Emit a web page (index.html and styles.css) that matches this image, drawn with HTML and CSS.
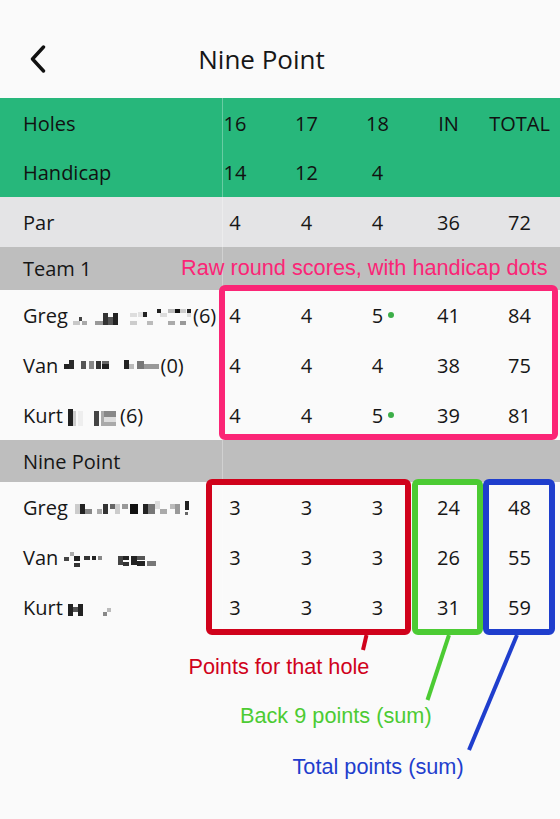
FILE: index.html
```html
<!DOCTYPE html>
<html lang="en">
<head>
<title>Nine Point</title>
<meta name="viewport" content="width=device-width, initial-scale=1" />
<meta charset="utf-8" />
<link rel="stylesheet" href="styles.css">
</head>
<body>
<div class="page">
<header class="nav">
	<svg class="back" viewBox="0 0 16 28"><path d="M13.5 2 L2.5 14 L13.5 26" /></svg>
	<h1>Nine Point</h1>
</header>

<div class="card">
	<div class="row head green">
		<div class="label"><span>Holes</span></div>
		<div>16</div><div>17</div><div>18</div><div>IN</div><div>TOTAL</div>
	</div>
	<div class="row hcp green">
		<div class="label"><span>Handicap</span></div>
		<div>14</div><div>12</div><div>4</div><div></div><div></div>
	</div>
	<div class="row par">
		<div class="label"><span>Par</span></div>
		<div>4</div><div>4</div><div>4</div><div>36</div><div>72</div>
	</div>

	<div class="row section">
		<div class="label"><span>Team 1</span></div>
	</div>
	<div class="row player">
		<div class="label"><span>Greg <svg class="mosaic" width="118" height="18"><rect x="0" y="12" width="7" height="4" fill="#c8c8c8"/><rect x="6" y="8" width="3" height="4" fill="#444"/><rect x="9" y="12" width="5" height="4" fill="#aaa"/><rect x="22" y="12" width="8" height="4" fill="#999"/><rect x="30" y="4" width="5" height="12" fill="#333"/><rect x="35" y="8" width="5" height="8" fill="#555"/><rect x="40" y="4" width="5" height="12" fill="#222"/><rect x="57" y="4" width="7" height="4" fill="#ddd"/><rect x="57" y="12" width="7" height="4" fill="#ccc"/><rect x="65" y="3" width="5" height="5" fill="#e2e2e2"/><rect x="70" y="3" width="4" height="5" fill="#222"/><rect x="74" y="12" width="6" height="4" fill="#bbb"/><rect x="84" y="0" width="4" height="4" fill="#222"/><rect x="87" y="4" width="7" height="4" fill="#ddd"/><rect x="95" y="0" width="7" height="4" fill="#bbb"/><rect x="95" y="12" width="7" height="4" fill="#aaa"/><rect x="102" y="0" width="5" height="4" fill="#111"/><rect x="107" y="0" width="6" height="4" fill="#ccc"/><rect x="107" y="12" width="6" height="4" fill="#999"/><rect x="114" y="0" width="4" height="4" fill="#222"/><rect x="114" y="4" width="4" height="4" fill="#ddd"/></svg>(6)</span></div>
		<div>4</div><div>4</div><div><span class="dot">5</span></div><div>41</div><div>84</div>
	</div>
	<div class="row player">
		<div class="label"><span>Van <svg class="mosaic" width="95" height="18"><rect x="0" y="5" width="5" height="5" fill="#222"/><rect x="5" y="1" width="5" height="9" fill="#2a2a2a"/><rect x="17" y="2" width="5" height="8" fill="#555"/><rect x="25" y="2" width="5" height="8" fill="#888"/><rect x="32" y="2" width="5" height="8" fill="#333"/><rect x="38" y="2" width="7" height="3" fill="#666"/><rect x="38" y="5" width="7" height="5" fill="#222"/><rect x="60" y="1" width="5" height="9" fill="#222"/><rect x="65" y="5" width="5" height="5" fill="#bbb"/><rect x="73" y="2" width="7" height="8" fill="#777"/><rect x="80" y="5" width="15" height="5" fill="#999"/></svg>(0)</span></div>
		<div>4</div><div>4</div><div>4</div><div>38</div><div>75</div>
	</div>
	<div class="row player">
		<div class="label"><span>Kurt <svg class="mosaic" width="50" height="18"><rect x="0" y="0" width="5" height="17" fill="#222"/><rect x="5" y="2" width="3" height="15" fill="#ccc"/><rect x="10" y="2" width="5" height="15" fill="#eee"/><rect x="26" y="2" width="5" height="15" fill="#444"/><rect x="33" y="2" width="3" height="15" fill="#aaa"/><rect x="36" y="2" width="12" height="6" fill="#888"/><rect x="36" y="8" width="12" height="5" fill="#ddd"/><rect x="36" y="13" width="12" height="4" fill="#aaa"/></svg>(6)</span></div>
		<div>4</div><div>4</div><div><span class="dot">5</span></div><div>39</div><div>81</div>
	</div>

	<div class="row section nine">
		<div class="label"><span>Nine Point</span></div>
	</div>
	<div class="row player">
		<div class="label"><span>Greg <svg class="mosaic" width="118" height="18"><rect x="2" y="3" width="5" height="10" fill="#ccc"/><rect x="7" y="3" width="5" height="10" fill="#222"/><rect x="12" y="8" width="7" height="5" fill="#888"/><rect x="24" y="8" width="5" height="5" fill="#aaa"/><rect x="30" y="3" width="5" height="10" fill="#333"/><rect x="37" y="3" width="5" height="5" fill="#666"/><rect x="42" y="3" width="5" height="10" fill="#ccc"/><rect x="49" y="3" width="6" height="5" fill="#999"/><rect x="57" y="3" width="8" height="10" fill="#111"/><rect x="70" y="3" width="5" height="10" fill="#222"/><rect x="75" y="3" width="7" height="10" fill="#777"/><rect x="82" y="0" width="5" height="8" fill="#ddd"/><rect x="87" y="8" width="7" height="5" fill="#aaa"/><rect x="97" y="3" width="5" height="5" fill="#bbb"/><rect x="102" y="3" width="5" height="10" fill="#999"/><rect x="112" y="0" width="4" height="9" fill="#222"/><rect x="112" y="11" width="3" height="3" fill="#666"/></svg></span></div>
		<div>3</div><div>3</div><div>3</div><div>24</div><div>48</div>
	</div>
	<div class="row player">
		<div class="label"><span>Van <svg class="mosaic" width="92" height="18"><rect x="0" y="6" width="5" height="4" fill="#444"/><rect x="6" y="1" width="4" height="4" fill="#aaa"/><rect x="10" y="5" width="6" height="5" fill="#222"/><rect x="10" y="12" width="6" height="4" fill="#333"/><rect x="20" y="5" width="6" height="4" fill="#333"/><rect x="28" y="5" width="4" height="4" fill="#222"/><rect x="34" y="5" width="4" height="4" fill="#888"/><rect x="54" y="5" width="5" height="9" fill="#444"/><rect x="59" y="5" width="6" height="4" fill="#222"/><rect x="59" y="11" width="6" height="4" fill="#333"/><rect x="67" y="5" width="6" height="9" fill="#222"/><rect x="73" y="5" width="8" height="4" fill="#555"/><rect x="73" y="10" width="8" height="5" fill="#222"/><rect x="83" y="10" width="9" height="5" fill="#777"/></svg></span></div>
		<div>3</div><div>3</div><div>3</div><div>26</div><div>55</div>
	</div>
	<div class="row player">
		<div class="label"><span>Kurt <svg class="mosaic" width="45" height="18"><rect x="0" y="3" width="5" height="12" fill="#222"/><rect x="5" y="6" width="5" height="5" fill="#555"/><rect x="10" y="3" width="5" height="12" fill="#222"/><rect x="39" y="7" width="4" height="4" fill="#bbb"/><rect x="35" y="11" width="4" height="4" fill="#888"/></svg></span></div>
		<div>3</div><div>3</div><div>3</div><div>31</div><div>59</div>
	</div>
</div>

<!-- callouts drawn over the scorecard -->
<svg class="notes" width="560" height="819" viewBox="0 0 560 819">
	<rect class="pink box" x="222" y="288" width="333" height="149" rx="3" />
	<rect class="red box" x="209" y="482" width="199" height="150" rx="3" />
	<rect class="green-ink box" x="415" y="482" width="65" height="150" rx="3" />
	<rect class="blue box" x="486" y="482" width="66" height="150" rx="3" />
	<line class="red lead" x1="366.5" y1="635" x2="363" y2="650" />
	<line class="green-ink lead" x1="449" y1="635" x2="427.5" y2="700" />
	<line class="blue lead" x1="517" y1="635" x2="469" y2="750" />
	<text class="pink tag" x="181" y="275">Raw round scores, with handicap dots</text>
	<text class="red tag" x="188.5" y="674">Points for that hole</text>
	<text class="green-ink tag" x="240" y="722.5">Back 9 points (sum)</text>
	<text class="blue tag" x="292.5" y="774">Total points (sum)</text>
</svg>
</div>
</body>
</html>
```

FILE: styles.css
```css
body {
	font-family: "Open Sans", sans-serif;
	color: #161616;
	background: #fafafa;
	margin: 0;
	padding: 0;
}
.page {
	position: relative;
	width: 560px;
	height: 819px;
	overflow: hidden;
}

/* top bar */
.nav {
	height: 98px;
	box-sizing: border-box;
	padding: 20px 37px 0 0;
	display: grid;
	grid-template-columns: 1fr auto 1fr;
	align-items: center;
}
.back {
	width: 16px;
	height: 28px;
	margin-left: 30px;
}
.back path {
	fill: none;
	stroke: #111;
	stroke-width: 3.4;
	stroke-linecap: round;
	stroke-linejoin: round;
}
.nav h1 {
	margin: 0;
	font-size: 26px;
	font-weight: 400;
}

/* scorecard rows */
.row {
	display: grid;
	grid-template-columns: 223px 48px repeat(4, 71px);
	font-size: 20px;
	height: 50px;
}
.row > * {
	display: flex;
	align-items: center;
	justify-content: center;
}
.row > :nth-child(2) {
	padding-right: 24px;
}
.row > .label {
	justify-content: flex-start;
	padding-left: 23px;
	border-right: 1px solid rgba(255, 255, 255, 0.3);
	white-space: nowrap;
}
.green {
	background: #27b77b;
	color: #111;
}
.hcp {
	height: 49px;
}
.par {
	background: #e4e4e6;
}
.section {
	background: #bebebe;
	height: 43px;
}
.section.nine {
	height: 42px;
}
.mosaic {
	vertical-align: -4px;
	margin-right: 2px;
}
.dot {
	position: relative;
}
.dot::after {
	content: "";
	position: absolute;
	left: calc(100% + 5px);
	top: calc(50% - 3px);
	width: 6px;
	height: 6px;
	border-radius: 50%;
	background: #3cae48;
}

/* callouts */
.notes {
	position: absolute;
	top: 0;
	left: 0;
	pointer-events: none;
}
.pink {
	stroke: #fb2576;
	fill: #fb2576;
}
.red {
	stroke: #d0021b;
	fill: #d0021b;
}
.green-ink {
	stroke: #4ccb33;
	fill: #4ccb33;
}
.blue {
	stroke: #1f3ecd;
	fill: #1f3ecd;
}
.box {
	fill: none;
	stroke-width: 6;
}
.lead {
	stroke-width: 4;
}
.tag {
	stroke: none;
	font-family: "Liberation Sans", Arial, sans-serif;
	font-size: 21.7px;
}
```
